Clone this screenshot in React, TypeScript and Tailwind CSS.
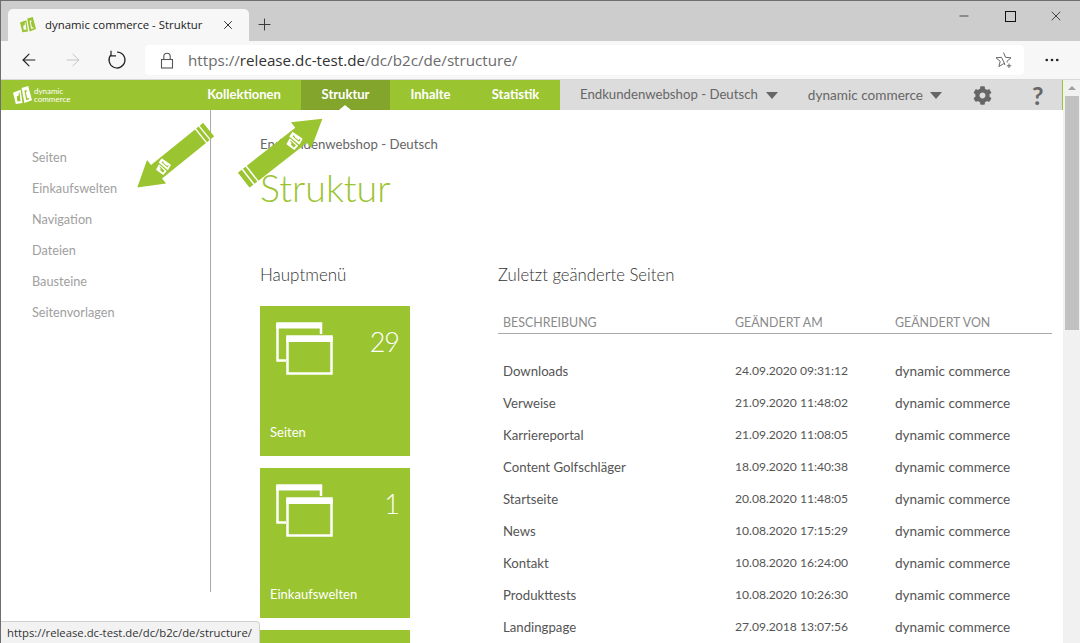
import React from "react";
import { ArrowLeft, ArrowRight, MoreHorizontal, X, Plus, Minus } from "lucide-react";
import { FaCog } from "react-icons/fa";

const pageFont = "font-['Lato',sans-serif]";

const rows = [
  ["Downloads", "24.09.2020 09:31:12"],
  ["Verweise", "21.09.2020 11:48:02"],
  ["Karriereportal", "21.09.2020 11:08:05"],
  ["Content Golfschläger", "18.09.2020 11:40:38"],
  ["Startseite", "20.08.2020 11:48:05"],
  ["News", "10.08.2020 17:15:29"],
  ["Kontakt", "10.08.2020 16:24:00"],
  ["Produkttests", "10.08.2020 10:26:30"],
  ["Landingpage", "27.09.2018 13:07:56"],
];

const sideItems = ["Seiten", "Einkaufswelten", "Navigation", "Dateien", "Bausteine", "Seitenvorlagen"];

const DcMark = ({ className, color = "#fff", cut = "#9bc431" }: { className?: string; color?: string; cut?: string }) => (
  <svg viewBox="0 0 20 20" width="20" height="20" className={className}>
    <path d="M0 7 L8 4 L10 18 L3 19 Z" fill={color} />
    <path d="M9 2 L16 0 L20 15 L12 18 Z" fill={color} />
    <path d="M4 11 L6 10 L6 7 L7 7 L8 16 L4.5 16 Z" fill={cut} />
    <path d="M12 5 L14 4 L14.5 6 L13.5 6.5 L15 13 L16.5 12.5 L17 14 L14 15 Z" fill={cut} />
  </svg>
);

const WindowsIcon = () => (
  <svg width="58" height="54" viewBox="0 0 58 54" className="block" fill="none" stroke="#fff">
    <path d="M10 38.5 H1.5 V1.5 H45 V12" strokeWidth="2.5" />
    <path d="M0 4 H46" strokeWidth="5" />
    <rect x="11.5" y="14.5" width="44" height="37" strokeWidth="2.5" />
    <path d="M10 17.5 H57" strokeWidth="5" />
  </svg>
);

const Tile = ({ n, label }: { n: string; label: string }) => (
  <div className="w-[150px] h-[150px] shrink-0 bg-[#9bc431] text-white flex flex-col justify-between pl-[10px] pr-[11px] pt-[16px] pb-[16px]">
    <div className="flex justify-between items-start pl-[6px]">
      <WindowsIcon />
      <span className="text-[27px] leading-[36px] tracking-[-1px] font-light mt-[2px]">{n}</span>
    </div>
    <span className="text-[13px] leading-[16px]">{label}</span>
  </div>
);

// green arrow with the stripes at the tail, drawn pointing right and rotated by the caller
const Arrow = ({ className, markAngle }: { className: string; markAngle: number }) => (
  <svg viewBox="0 0 100 33" className={className}>
    <path d="M0 7 H5 V26 H0 Z M6.5 7 H10 V26 H6.5 Z M11.5 7 H73 V0 L100 16.5 L73 33 V26 H11.5 Z" fill="#9bc431" />
    <g transform={`translate(64 16.5) rotate(${markAngle}) scale(0.8) translate(-10 -10)`}>
      <DcMark />
    </g>
  </svg>
);

export default function App() {
  return (
    <div className="relative w-[1080px] h-[643px] overflow-hidden bg-white border-t border-l border-[#6e6e6e] flex flex-col font-['Open_Sans',sans-serif]">
      {/* tab strip */}
      <div className="h-[40px] shrink-0 bg-[#cdcdcd] flex items-end pl-[7px]">
        <div className="w-[241px] h-[32px] bg-[#f7f7f7] rounded-t-[5px] flex items-center pl-[12px] pr-[14px]">
          <DcMark className="w-[16px] h-[16px]" color="#9bc431" cut="#f7f7f7" />
          <span className="ml-[9px] text-[11.4px] text-[#222] grow">dynamic commerce - Struktur</span>
          <X size={14} strokeWidth={1.6} className="text-[#222]" />
        </div>
        <Plus size={19} strokeWidth={1.2} className="ml-[6px] mb-[7px] text-[#333]" />
        <div className="ml-auto flex items-center pb-[17px] text-[#111]">
          <Minus size={14} strokeWidth={1.2} className="mr-[34px]" />
          <div className="w-[11px] h-[11px] border border-[#111] mr-[32px]" />
          <X size={16} strokeWidth={1.1} className="mr-[16px]" />
        </div>
      </div>

      {/* address bar */}
      <div className="h-[39px] shrink-0 bg-[#f7f7f7] flex items-center pl-[18px] border-b border-[#d8d8d8]">
        <ArrowLeft size={20} strokeWidth={1.4} className="text-[#222]" />
        <ArrowRight size={20} strokeWidth={1.2} className="ml-[24px] text-[#c4c4c4]" />
        <svg width="20" height="20" viewBox="0 0 20 20" fill="none" stroke="#222" strokeWidth="1.2" className="ml-[24px]">
          <path d="M10 2 A8 8 0 1 1 3.6 5.2" />
          <path d="M4 0.8 V5.8 H9" />
        </svg>
        <div className="ml-[18px] w-[879px] h-[30px] bg-white rounded-[4px] flex items-center pl-[15px] pr-[11px]">
          <svg width="14" height="17" viewBox="0 0 14 17" fill="none" stroke="#555" strokeWidth="1.1">
            <rect x="1.5" y="7.5" width="11" height="8.5" />
            <path d="M3.8 7.5 V4.5 A3.2 3.2 0 0 1 10.2 4.5 V7.5" />
          </svg>
          <span className="ml-[14px] text-[15.2px] text-[#6b6b6b] grow">
            https://<span className="text-[#333]">release.dc-test.de</span>/dc/b2c/de/structure/
          </span>
          <svg width="18" height="18" viewBox="0 0 18 18" fill="none" stroke="#666" strokeWidth="1">
            <path d="M8.5 1.5 L10.5 6.3 L16 6.8 L11.9 10.4 L12.3 11.5 M10 13.5 L8.5 12.7 L3.9 15.6 L5.2 10.4 L1 6.8 L6.5 6.3 Z" />
            <path d="M14 12.5 V17 M11.8 14.8 H16.3" />
          </svg>
        </div>
        <MoreHorizontal size={18} strokeWidth={1.6} className="ml-[19px] text-[#222]" />
      </div>

      {/* page */}
      <div className="grow min-h-0 flex">
        <div className={`grow min-w-0 flex flex-col ${pageFont}`}>
          {/* site nav */}
          <div className="h-[30px] shrink-0 flex bg-[#dcdcdc]">
            <div className="w-[559px] bg-[#9bc431] flex items-center text-white text-[13px] font-bold">
              <div className="w-[186px] pl-[12px] flex items-center">
                <DcMark className="w-[19px] h-[19px]" />
                <span className="ml-[2px] text-[8px] leading-[8px] font-normal">dynamic<br />commerce</span>
              </div>
              <span className="w-[114px] text-center">Kollektionen</span>
              <span className="relative w-[89px] h-full flex items-center justify-center bg-[#83a52c]">
                Struktur
                <span className="absolute bottom-0 left-[38px] w-0 h-0 border-x-[6px] border-x-transparent border-b-[5px] border-b-white" />
              </span>
              <span className="w-[81px] text-center">Inhalte</span>
              <span className="w-[89px] text-center">Statistik</span>
            </div>
            <div className="grow flex items-center text-[#666] border-r border-[#9bc431]">
              <span className="ml-[20px] text-[13.2px]">Endkundenwebshop - Deutsch</span>
              <span className="ml-[8px] w-0 h-0 border-x-[6px] border-x-transparent border-t-[7px] border-t-[#666]" />
              <span className="ml-[30px] text-[13.6px]">dynamic commerce</span>
              <span className="ml-[7px] w-0 h-0 border-x-[6px] border-x-transparent border-t-[7px] border-t-[#666]" />
              <FaCog size={19} className="ml-[31px] text-[#666]" />
              <span className="ml-[40px] text-[25px] font-bold leading-none">?</span>
            </div>
          </div>

          <div className="grow min-h-0 flex overflow-hidden">
            {/* side menu */}
            <div className="w-[210px] h-[482px] shrink-0 border-r border-[#aaaaaa] pt-[38px] pl-[31px] flex flex-col gap-[13px] text-[12.7px] leading-[18px] text-[#a0a0a0]">
              {sideItems.map((s) => (
                <span key={s}>{s}</span>
              ))}
            </div>

            <div className="grow min-w-0 pl-[49px] pr-[11px] pt-[25px]">
              <p className="text-[13.2px] leading-[18px] text-[#666]">Endkundenwebshop - Deutsch</p>
              <h1 className="mt-[13px] text-[37.5px] leading-[44px] font-light text-[#9bc431]">Struktur</h1>
              <div className="mt-[54px] flex gap-[88px]">
                <div className="w-[150px] shrink-0">
                  <h2 className="text-[17px] leading-[22px] font-light text-[#333]">Hauptmenü</h2>
                  <div className="mt-[20px] flex flex-col gap-[12px]">
                    <Tile n="29" label="Seiten" />
                    <Tile n="1" label="Einkaufswelten" />
                    <div className="h-[150px] bg-[#9bc431]" />
                  </div>
                </div>
                <div className="grow min-w-0">
                  <h2 className="text-[16.7px] leading-[22px] font-light text-[#333]">Zuletzt geänderte Seiten</h2>
                  <div className="mt-[29px] h-[19px] border-b border-[#aaaaaa] flex pl-[5px] text-[12.4px] leading-[16px] text-[#8a8a8a]">
                    <span className="w-[232px]">BESCHREIBUNG</span>
                    <span className="w-[160px]">GEÄNDERT AM</span>
                    <span>GEÄNDERT VON</span>
                  </div>
                  <div className="mt-[28px] flex flex-col gap-[14px] text-[13.2px] leading-[18px] text-[#555]">
                    {rows.map((r) => (
                      <div key={r[0]} className="flex pl-[5px]">
                        <span className="w-[232px]">{r[0]}</span>
                        <span className="w-[160px] text-[12.1px]">{r[1]}</span>
                        <span className="text-[13.6px]">dynamic commerce</span>
                      </div>
                    ))}
                  </div>
                </div>
              </div>
            </div>
          </div>
        </div>

        {/* scrollbar */}
        <div className="w-[17px] shrink-0 bg-[#f1f1f1] flex flex-col items-center pt-[6px]">
          <span className="w-0 h-0 border-x-[4px] border-x-transparent border-b-[4px] border-b-[#a0a0a0]" />
          <div className="mt-[6px] w-[14px] h-[234px] bg-[#c1c1c1]" />
        </div>
      </div>

      {/* annotation arrows */}
      <Arrow className="absolute left-[126px] top-[141px] w-[92px] h-[33px] rotate-[141deg]" markAngle={-181} />
      <Arrow className="absolute left-[232px] top-[132px] w-[100px] h-[33px] -rotate-[38deg]" markAngle={-2} />

      {/* status bubble */}
      <div className="absolute left-0 bottom-0 h-[22px] w-[259px] bg-[#f2f2f2] border-t border-r border-[#d0d0d0] rounded-tr-[4px] pl-[6px] text-[11.3px] leading-[21px] text-[#333] whitespace-nowrap">
        https://release.dc-test.de/dc/b2c/de/structure/
      </div>
    </div>
  );
}
